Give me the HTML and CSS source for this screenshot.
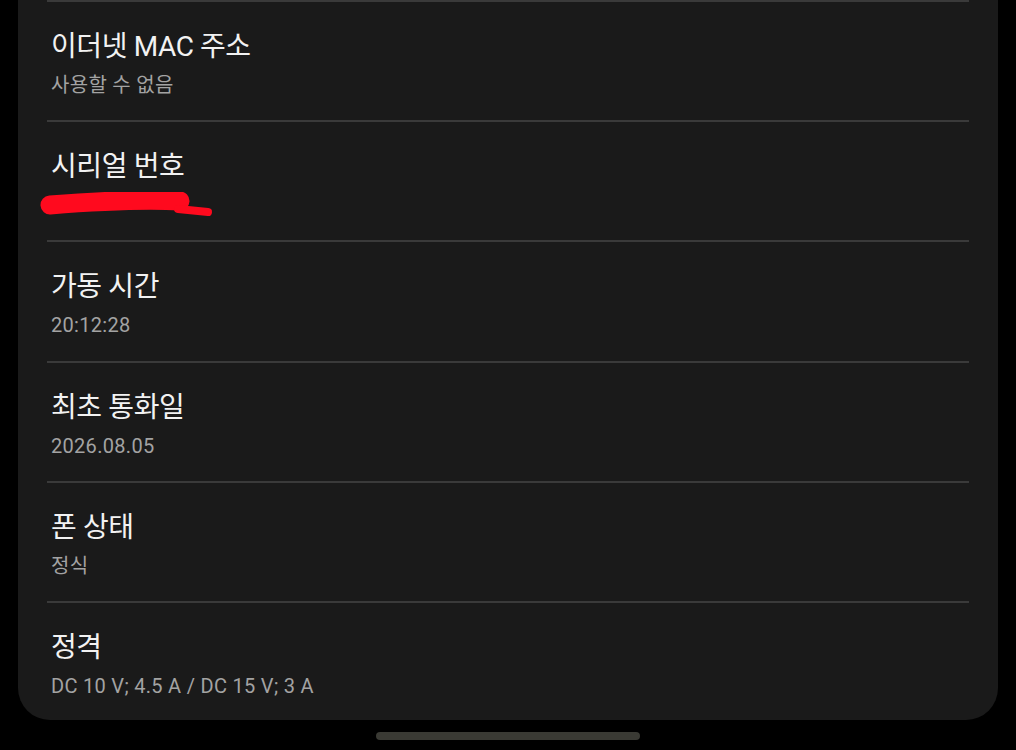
FILE: index.html
```html
<!DOCTYPE html>
<html lang="ko">
<head>
  <meta charset="UTF-8">
  <title>휴대전화 정보</title>
  <link rel="stylesheet" href="styles.css">
</head>
<body>
  <div class="card">
    <div class="item">
      <div class="title">이더넷 MAC 주소</div>
      <div class="value">사용할 수 없음</div>
    </div>
    <div class="item">
      <div class="title">시리얼 번호</div>
      <div class="value hidden">
        <svg class="scribble" width="180" height="34" viewBox="0 0 180 34">
          <path d="M12 13 C 50 10, 100 7, 142 9" fill="none" stroke="#ff0a1e" stroke-width="19" stroke-linecap="round"/>
          <path d="M140 17 L 170 20" fill="none" stroke="#ff0a1e" stroke-width="8" stroke-linecap="round"/>
        </svg>
      </div>
    </div>
    <div class="item">
      <div class="title">가동 시간</div>
      <div class="value">20:12:28</div>
    </div>
    <div class="item">
      <div class="title">최초 통화일</div>
      <div class="value">2026.08.05</div>
    </div>
    <div class="item">
      <div class="title">폰 상태</div>
      <div class="value">정식</div>
    </div>
    <div class="item">
      <div class="title">정격</div>
      <div class="value">DC 10 V; 4.5 A / DC 15 V; 3 A</div>
    </div>
  </div>
  <div class="home-bar"></div>
</body>
</html>
```

FILE: styles.css
```css
html, body {
  margin: 0;
  padding: 0;
  background: #000;
}
body {
  font-family: Roboto, 'Noto Sans CJK KR', sans-serif;
  width: 1016px;
  height: 750px;
  overflow: hidden;
}
.card {
  margin: 0 18px;
  background: #1a1a1a;
  border-radius: 0 0 32px 32px;
  padding: 0 29px;
  height: 720px;
  box-sizing: border-box;
}
.item {
  border-top: 2px solid #3a3a3a;
  height: 118.2px;
  padding: 0 4px;
}
.title {
  color: #f2f2f2;
  font-size: 28px;
  line-height: 36px;
  padding-top: 27px;
  letter-spacing: -0.4px;
}
.value {
  color: #a3a3a3;
  font-size: 20px;
  line-height: 28px;
  padding-top: 6px;
  letter-spacing: 0.3px;
}
.value.hidden {
  position: relative;
  height: 28px;
}
.scribble {
  position: absolute;
  left: -13px;
  top: 7px;
}
.home-bar {
  width: 264px;
  height: 8px;
  border-radius: 4px;
  background: #3a3a34;
  margin: 12px auto 0;
}
```
